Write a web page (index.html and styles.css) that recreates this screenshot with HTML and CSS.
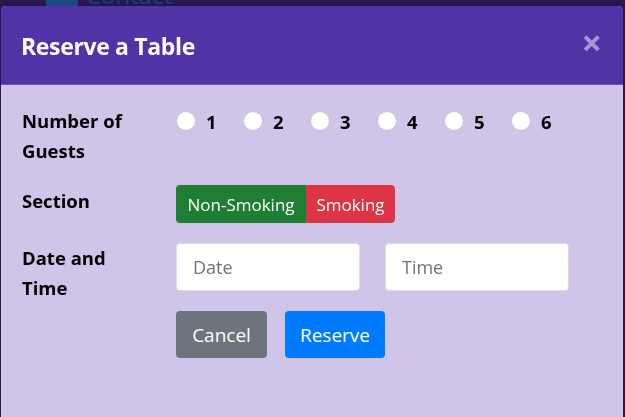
FILE: index.html
```html
<!DOCTYPE html>
<html lang="en">
<head>
<meta charset="utf-8">
<title>Reserve a Table</title>
<link rel="stylesheet" href="styles.css">
</head>
<body>
<nav class="navbar">
  <span class="nav-link">
    <svg class="nav-icon" viewBox="0 0 32 24" width="32" height="24" aria-hidden="true">
      <rect x="0" y="0" width="32" height="24" rx="2" fill="#1e4a86"/>
      <rect x="14" y="6" width="14" height="3" fill="#2a1a58"/>
      <circle cx="8" cy="9" r="4" fill="#2a1a58"/>
    </svg>
    <span class="nav-text">Contact</span>
  </span>
</nav>

<div class="modal">
  <div class="modal-header">
    <h4 class="modal-title">Reserve a Table</h4>
    <span class="close">&times;</span>
  </div>
  <div class="modal-body">
    <div class="form-row row-guests">
      <div class="form-label">Number of Guests</div>
      <div class="radios">
        <label class="radio"><span class="radio-dot"></span><span class="radio-text">1</span></label>
        <label class="radio"><span class="radio-dot"></span><span class="radio-text">2</span></label>
        <label class="radio"><span class="radio-dot"></span><span class="radio-text">3</span></label>
        <label class="radio"><span class="radio-dot"></span><span class="radio-text">4</span></label>
        <label class="radio"><span class="radio-dot"></span><span class="radio-text">5</span></label>
        <label class="radio"><span class="radio-dot"></span><span class="radio-text">6</span></label>
      </div>
    </div>
    <div class="form-row row-section">
      <div class="form-label section-label">Section</div>
      <div class="btn-group">
        <span class="btn btn-success">Non-Smoking</span>
        <span class="btn btn-danger">Smoking</span>
      </div>
    </div>
    <div class="form-row row-date">
      <div class="form-label">Date and Time</div>
      <div class="inputs">
        <input class="form-control input-date" type="text" placeholder="Date">
        <input class="form-control input-time" type="text" placeholder="Time">
      </div>
    </div>
    <div class="form-row row-actions">
      <div class="form-label"></div>
      <div class="actions">
        <span class="btn-lg btn-secondary">Cancel</span>
        <span class="btn-lg btn-primary">Reserve</span>
      </div>
    </div>
  </div>
</div>
</body>
</html>
```

FILE: styles.css
```css
* { box-sizing: border-box; }

html, body {
  margin: 0;
  height: 100%;
}

body {
  background: #27174f;
  font-family: "Open Sans", "Noto Sans", sans-serif;
  overflow: hidden;
}

.navbar {
  margin-top: -17px;
  padding-left: 46px;
  height: 26px;
}

.nav-link {
  display: flex;
  align-items: center;
  gap: 8px;
  color: #1f3d7c;
  font-size: 24px;
  line-height: 24px;
}

.nav-icon { display: block; }

.modal {
  position: fixed;
  top: 6px;
  left: 1px;
  right: 2px;
  bottom: -20px;
  background: #d1c4e9;
  border-radius: 5px;
  overflow: hidden;
}

.modal-header {
  height: 79px;
  background: #5033a5;
  display: flex;
  align-items: center;
  justify-content: space-between;
  padding: 0 21px 0 20px;
  border-bottom: 1px solid #6a52b3;
}

.modal-title {
  margin: 0;
  color: #ffffff;
  font-size: 23px;
  font-weight: 700;
  letter-spacing: -0.35px;
  padding-top: 1px;
}

.close {
  color: #a897d6;
  font-size: 36px;
  font-weight: 700;
  line-height: 1;
  margin-top: -5px;
}

.modal-body {
  padding: 21px 20px 0 21px;
}

.form-row {
  display: flex;
  align-items: flex-start;
}

.form-label {
  width: 154px;
  flex: none;
  font-size: 18.5px;
  font-weight: 700;
  line-height: 30px;
  color: #000;
  padding-right: 40px;
}

.row-guests { height: 60px; margin-bottom: 19px; }
.row-section { height: 38px; margin-bottom: 20px; }
.row-date { height: 61px; margin-bottom: 7px; }

.section-label { margin-top: 1px; }

.radios {
  display: flex;
}

.radio {
  display: flex;
  align-items: center;
  width: 67px;
  height: 30px;
}

.radio-dot {
  width: 20px;
  height: 20px;
  border-radius: 50%;
  background: #fff;
  border: 1px solid #c2c4cc;
  margin-right: 10px;
  flex: none;
}

.radio-text {
  font-size: 18.5px;
  font-weight: 700;
  color: #000;
}

.btn-group {
  display: flex;
  height: 38px;
}

.btn {
  display: flex;
  align-items: center;
  justify-content: center;
  color: #fff;
  font-size: 17px;
  height: 38px;
}

.btn-success {
  background: #1e7e34;
  width: 130px;
  border-radius: 4px 0 0 4px;
}

.btn-danger {
  background: #dc3545;
  width: 89px;
  border-radius: 0 4px 4px 0;
}

.inputs {
  display: flex;
  gap: 25px;
}

.form-control {
  height: 48px;
  background: #fff;
  border: 1px solid #dcdde3;
  border-radius: 4px;
  padding: 0 16px;
  font-family: "Open Sans", "Noto Sans", sans-serif;
  font-size: 18px;
  color: #495057;
  outline: none;
}

.form-control::placeholder { color: #6c757d; }

.input-date { width: 184px; }
.input-time { width: 184px; }

.actions {
  display: flex;
  gap: 18px;
}

.btn-lg {
  display: flex;
  align-items: center;
  justify-content: center;
  height: 47px;
  border-radius: 4px;
  color: #fff;
  font-size: 19px;
}

.btn-secondary { background: #6c757d; width: 91px; }
.btn-primary { background: #007bff; width: 100px; }
```
